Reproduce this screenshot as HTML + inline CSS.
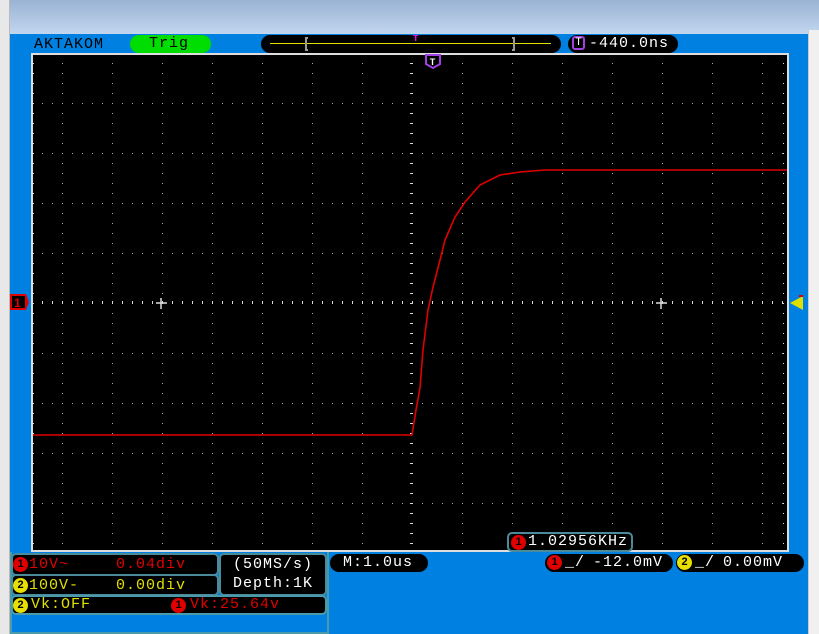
<!DOCTYPE html>
<html><head><meta charset="utf-8"><style>
*{margin:0;padding:0;box-sizing:border-box}
body{width:819px;height:634px;overflow:hidden;background:#f0f0f0;position:relative;font-family:"Liberation Mono","DejaVu Sans Mono",monospace;font-size:14px;letter-spacing:1px}
.a{position:absolute;white-space:nowrap}
.pill{position:absolute;background:#000;border-radius:9px;color:#fff;white-space:nowrap}
.c{position:absolute;display:block;width:15px;height:15px;border-radius:50%;text-align:center;line-height:15px;font-size:11px;letter-spacing:0;font-family:"Liberation Sans",sans-serif;font-weight:bold}
.r{background:#e00000;color:#000}.y{background:#e8e000;color:#000}
.box{position:absolute;background:#000;border:2px solid #4a8a9a;border-radius:5px;white-space:nowrap}
.t{position:absolute;line-height:16px}
</style></head><body>
<div class="a" style="left:0;top:0;width:819px;height:34px;background:linear-gradient(#9ab3d4,#c2d6ee)"></div>
<div class="a" style="left:0;top:0;width:10px;height:634px;background:#e8e8e8;border-right:1px solid #bbb"></div>
<div class="a" style="left:10px;top:34px;width:798px;height:600px;background:#0080e0"></div>
<div class="a" style="left:808px;top:30px;width:11px;height:604px;background:#f0f0f0;border-left:1px solid #ccc"></div>
<div class="a" style="left:34px;top:36px;color:#000;font-size:15px">AKTAKOM</div>
<div class="a" style="left:130px;top:35px;width:81px;height:18px;background:#00dd00;border-radius:9px;font-size:15px;line-height:18px;padding-left:19px">Trig</div>
<div class="pill" style="left:261px;top:35px;width:300px;height:18px">
 <div class="a" style="left:9px;top:8px;width:281px;height:1px;background:#e0e000"></div>
 <div class="a" style="left:44px;top:2px;width:3px;height:14px;border:2px solid #999;border-right:none"></div>
 <div class="a" style="left:251px;top:2px;width:3px;height:14px;border:2px solid #999;border-left:none"></div>
 <div class="a" style="left:152px;top:0px;color:#f0f;font-size:9px;font-weight:bold;line-height:8px">T</div>
</div>
<div class="pill" style="left:568px;top:35px;width:110px;height:18px;font-size:15px;line-height:18px;padding-left:4px"><span style="display:inline-block;width:13px;height:14px;border:2px solid #a040e0;border-radius:3px;color:#fff;font-size:11px;line-height:10px;text-align:center;vertical-align:middle;letter-spacing:0">T</span><span style="position:absolute;left:21px">-440.0ns</span></div>
<svg class="a" style="left:0;top:0" width="819" height="634">
<defs>
<pattern id="vd" x="12" y="3" width="50" height="10" patternUnits="userSpaceOnUse"><rect width="1" height="1" fill="#aaa"/></pattern>
<pattern id="hd" x="2" y="3" width="10" height="50" patternUnits="userSpaceOnUse"><rect width="1" height="1" fill="#aaa"/></pattern>
<pattern id="tk" x="2" y="0" width="10" height="10" patternUnits="userSpaceOnUse"><rect width="1" height="4" fill="#ddd"/></pattern>
<pattern id="tkv" x="0" y="3" width="10" height="10" patternUnits="userSpaceOnUse"><rect width="4" height="1" fill="#ddd"/></pattern>
</defs>
<rect x="31" y="53" width="758" height="499" fill="#000"/>
<rect x="31" y="53" width="758" height="499" fill="url(#vd)"/>
<rect x="31" y="53" width="758" height="499" fill="url(#hd)"/>
<rect x="31" y="53" width="758" height="2" fill="#ddd"/>
<rect x="31" y="550" width="758" height="2" fill="#ddd"/>
<rect x="31" y="53" width="2" height="499" fill="#ddd"/>
<rect x="787" y="53" width="2" height="499" fill="#ddd"/>
<rect x="33" y="55" width="754" height="4" fill="url(#tk)"/>
<rect x="33" y="546" width="754" height="4" fill="url(#tk)"/>
<rect x="33" y="55" width="4" height="495" fill="url(#tkv)"/>
<rect x="783" y="55" width="4" height="495" fill="url(#tkv)"/>
<rect x="33" y="301" width="754" height="4" fill="url(#tk)"/>
<rect x="409" y="55" width="4" height="495" fill="url(#tkv)"/>
<path d="M156 303h11M161 298v11M656 303h11M661 298v11" stroke="#ddd" stroke-width="1.5"/>
<path d="M33 435H412L416 410 420 388 423 350 428 310 433 287 440 260 445 240 455 217 465 202 480 185 500 175 520 172 545 170H787" fill="none" stroke="#e00000" stroke-width="1.6"/>
<path d="M426 55h14v9l-7 4-7-4z" fill="#000" stroke="#a040e0" stroke-width="2"/>
<text x="433" y="65" fill="#fff" font-size="9" font-family="Liberation Sans" font-weight="bold" text-anchor="middle">T</text>
<path d="M10 294h16l3 8-3 8H10z" fill="#e00000"/>
<rect x="12" y="296" width="13" height="12" fill="#000"/>
<text x="18" y="307" fill="#e00000" font-size="12" font-family="Liberation Sans" font-weight="bold" text-anchor="middle">1</text>
<path d="M790 303l13-7v14z" fill="#e0e000"/>
<rect x="799" y="295" width="4" height="2" fill="#e00000"/>
</svg>
<div class="box" style="left:507px;top:532px;width:126px;height:20px;color:#fff;font-size:15px"><span class="c r" style="left:2px;top:1px">1</span><span class="t" style="left:19px;top:0">1.02956KHz</span></div>
<div class="a" style="left:10px;top:552px;width:319px;height:82px;border:2px solid #4a9aaa;border-top:none"></div>
<div class="box" style="left:11px;top:553px;width:208px;height:23px;color:#e00000;font-size:15px"><span class="c r" style="left:0;top:2px">1</span><span class="t" style="left:16px;top:2px">10V~</span><span class="t" style="left:103px;top:2px">0.04div</span></div>
<div class="box" style="left:11px;top:574px;width:208px;height:22px;color:#e0e000;font-size:15px"><span class="c y" style="left:0;top:2px">2</span><span class="t" style="left:16px;top:2px">100V-</span><span class="t" style="left:103px;top:2px">0.00div</span></div>
<div class="box" style="left:219px;top:553px;width:108px;height:43px;color:#fff;font-size:15px;line-height:19px;text-align:center">(50MS/s)<br>Depth:1K</div>
<div class="box" style="left:11px;top:595px;width:316px;height:20px;border-color:#4a9aaa;font-size:15px"><span class="c y" style="left:0;top:1px">2</span><span class="t" style="left:18px;top:0;color:#e0e000">Vk:OFF</span><span class="c r" style="left:158px;top:1px">1</span><span class="t" style="left:177px;top:0;color:#e00000">Vk:25.64v</span></div>
<div class="pill" style="left:330px;top:554px;width:98px;height:18px;font-size:15px;line-height:18px;padding-left:13px">M:1.0us</div>
<div class="pill" style="left:545px;top:554px;width:128px;height:18px;font-size:15px"><span class="c r" style="left:2px;top:1px">1</span><span class="t" style="left:20px;top:1px">_/</span><span class="t" style="left:48px;top:1px">-12.0mV</span></div>
<div class="pill" style="left:676px;top:554px;width:128px;height:18px;font-size:15px"><span class="c y" style="left:1px;top:1px">2</span><span class="t" style="left:19px;top:1px">_/</span><span class="t" style="left:47px;top:1px">0.00mV</span></div>
</body></html>
